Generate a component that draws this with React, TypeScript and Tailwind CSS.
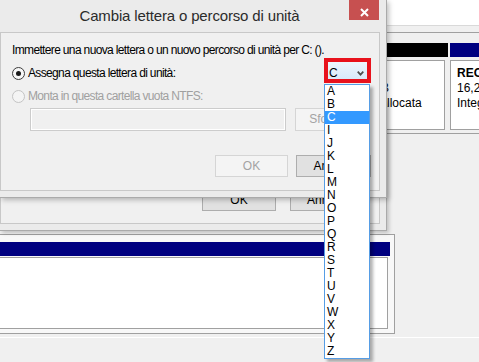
const letters = ["A", "B", "C", "I", "J", "K", "L", "M", "N", "O", "P", "Q", "R", "S", "T", "U", "V", "W", "X", "Y", "Z"];

function Radio({ checked, disabled }: { checked?: boolean; disabled?: boolean }) {
  return (
    <span
      className={`flex h-[13px] w-[13px] shrink-0 items-center justify-center rounded-full border ${
        disabled ? "border-[#c4c4c4] bg-[#f4f4f4]" : "border-[#3c3c3c] bg-[#f7f7f7]"
      }`}
    >
      {checked && <span className="h-[5px] w-[5px] rounded-full bg-[#1a1a1a]" />}
    </span>
  );
}

function Button({ label, disabled, className }: { label: string; disabled?: boolean; className: string }) {
  return (
    <div
      className={`flex shrink-0 items-center justify-center border ${
        disabled ? "border-[#d5d5d5] bg-[#f4f4f4] text-[#a3a3a3]" : "border-[#adadad] bg-[#e1e1e1] text-black"
      } ${className}`}
    >
      {label}
    </div>
  );
}

function DiskManagement() {
  return (
    <div className="absolute inset-0 flex flex-col bg-[#f0f0f0]">
      <div className="h-[26px] shrink-0 border-b border-[#d9d9d9] bg-white" />
      <div className="h-[7px] shrink-0 border-b border-[#a0a0a0]" />

      {/* Disco 0 */}
      <div className="mt-[10px] flex shrink-0 gap-[2px] border-b border-[#a0a0a0] pb-[3px] leading-[15px]">
        <div className="w-[347px] shrink-0 pl-[6px] pt-[20px]">
          <div className="font-bold">Disco 0</div>
          <div>Base</div>
          <div>931,51 GB</div>
          <div>Online</div>
        </div>
        <div className="w-[99px] shrink-0">
          <div className="h-[14px] bg-black" />
          <div className="mr-[3px] mt-[3px] h-[70px] overflow-hidden whitespace-nowrap border border-[#a0a0a0] bg-white pl-[5px] pt-[5px]">
            <div>&nbsp;</div>
            <div>10 GB</div>
            <div>Non allocata</div>
          </div>
        </div>
        <div className="w-[200px] shrink-0">
          <div className="h-[14px] bg-[#000080]" />
          <div className="mr-[3px] mt-[3px] h-[70px] overflow-hidden whitespace-nowrap border border-[#a0a0a0] bg-white pl-[6px] pt-[5px]">
            <div className="font-bold">RECOVERY</div>
            <div>16,27 GB NTFS</div>
            <div>Integro (Partizione OEM)</div>
          </div>
        </div>
      </div>

      {/* Disco 1 */}
      <div className="ml-[-6px] mt-[100px] w-[401px] shrink-0 border border-[#a0a0a0] bg-[#f8f8f8] pb-[4px] pr-[4px] pt-[7px]">
        <div className="h-[14px] bg-[#000080]" />
        <div className="mr-[2px] mt-px h-[72px] border-b border-r border-t border-[#a0a0a0] bg-white" />
      </div>
      <div className="mt-[3px] h-px shrink-0 bg-white" />
    </div>
  );
}

function ParentDialog() {
  return (
    <div className="absolute left-0 top-[100px] flex h-[131px] w-[387px] flex-col border-b border-r border-[#aaaaaa] bg-[#ebebeb] shadow-[2px_2px_4px_rgba(0,0,0,0.2)]">
      <div className="h-[32px] shrink-0" />
      <div className="mb-[6px] mr-[6px] flex flex-1 items-end justify-end gap-[14px] border border-[#c8c8c8] bg-[#f0f0f0] pb-[12px] pr-[15px]">
        <Button label="OK" className="h-[23px] w-[74px]" />
        <Button label="Annulla" className="h-[23px] w-[74px]" />
      </div>
    </div>
  );
}

function LetterDialog() {
  return (
    <div className="absolute left-0 top-0 flex h-[198px] w-[387px] flex-col border-b border-r border-[#aaaaaa] bg-[#ebebeb] shadow-[2px_2px_5px_rgba(0,0,0,0.25)]">
      <div className="relative h-[32px] shrink-0">
        <div className="w-[379px] pt-[6px] text-center text-[15px] leading-[20px] tracking-[-0.15px] text-[#2b2b2b]">
          Cambia lettera o percorso di unità
        </div>
        <div className="absolute right-[7px] top-0 flex h-[20px] w-[30px] items-start justify-center bg-[#c75050] pt-[8px]">
          <svg width="9" height="9" viewBox="0 0 9 9">
            <path d="M1 1L8 8M8 1L1 8" stroke="#ffffff" strokeWidth="2" />
          </svg>
        </div>
      </div>

      <div className="mb-[6px] mr-[6px] flex flex-1 flex-col border border-[#c8c8c8] bg-[#f0f0f0] pl-[11px] pr-[8px] pt-[10px] leading-[15px] tracking-[-0.65px]">
        <p className="whitespace-nowrap">Immettere una nuova lettera o un nuovo percorso di unità per C: ().</p>

        <div className="flex h-[25px] justify-between">
          <div className="mt-[8px] flex h-[15px] items-center gap-[3px]">
            <Radio checked />
            <span>Assegna questa lettera di unità:</span>
          </div>
          <div className="h-[25px] w-[47px] border-4 border-[#e8121c] tracking-normal">
            <div className="flex h-full items-start justify-between bg-linear-to-b from-[#eef6fd] to-[#d8eafb] pl-[1px] pr-[3px]">
              <span className="pt-[4px]">C</span>
              <svg className="mt-[9px]" width="7" height="5" viewBox="0 0 7 5">
                <path d="M0.7 0.7L3.5 3.7L6.3 0.7" stroke="#4d4d4d" strokeWidth="1.7" fill="none" />
              </svg>
            </div>
          </div>
        </div>

        <div className="mt-[6px] flex h-[15px] items-center gap-[3px] text-[#a0a0a0]">
          <Radio disabled />
          <span>Monta in questa cartella vuota NTFS:</span>
        </div>

        <div className="mt-[4px] flex h-[23px] gap-[9px] tracking-normal">
          <div className="ml-[18px] w-[256px] border border-[#cccccc] bg-[#f0f0f0] shadow-[inset_0_0_0_1px_#ffffff]" />
          <Button label="Sfoglia..." disabled className="w-[75px]" />
        </div>

        <div className="mt-[24px] flex h-[22px] justify-end gap-[8px] tracking-normal">
          <Button label="OK" disabled className="w-[73px]" />
          <Button label="Annulla" className="w-[75px]" />
        </div>
      </div>
    </div>
  );
}

function LetterList() {
  return (
    <div className="absolute left-[324px] top-[84px] flex h-[275px] w-[46px] flex-col border border-[#569de5] bg-white shadow-[3px_3px_3px_rgba(0,0,0,0.3)]">
      {letters.map((l) => (
        <div
          key={l}
          className={`h-[13px] pl-[2px] leading-[13px] ${l === "C" ? "bg-[#3399ff] text-white" : "text-black"}`}
        >
          {l}
        </div>
      ))}
    </div>
  );
}

export default function App() {
  return (
    <div className="relative h-[362px] w-[479px] overflow-hidden bg-[#f0f0f0] font-['Liberation_Sans',Arial,sans-serif] text-[12px] text-black">
      <DiskManagement />
      <ParentDialog />
      <LetterDialog />
      <LetterList />
    </div>
  );
}
